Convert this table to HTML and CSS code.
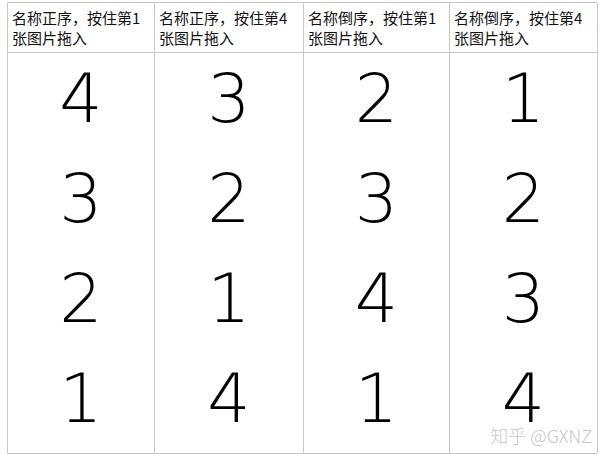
FILE: index.html
```html
<!DOCTYPE html>
<html lang="zh">
<head>
<meta charset="utf-8">
<link rel="stylesheet" href="styles.css">
</head>
<body>
<div class="sheet">
  <div class="grid">
    <div class="head">名称正序，按住第1张图片拖入</div>
    <div class="head">名称正序，按住第4张图片拖入</div>
    <div class="head">名称倒序，按住第1张图片拖入</div>
    <div class="head">名称倒序，按住第4张图片拖入</div>

    <div class="cell">4</div><div class="cell">3</div><div class="cell">2</div><div class="cell">1</div>
    <div class="cell">3</div><div class="cell">2</div><div class="cell">3</div><div class="cell">2</div>
    <div class="cell">2</div><div class="cell">1</div><div class="cell">4</div><div class="cell">3</div>
    <div class="cell">1</div><div class="cell">4</div><div class="cell">1</div><div class="cell">4</div>
  </div>
  <div class="mark">知乎 @GXNZ</div>
</div>
</body>
</html>
```
FILE: styles.css
```css
html, body {
  margin: 0;
  padding: 0;
  background: #fff;
}
.sheet {
  position: relative;
  width: 606px;
  height: 461px;
}
.grid {
  position: relative;
  top: 2px;
  left: 7px;
  width: 590px;
  display: grid;
  grid-template-columns: 147px 149px 146px 148px;
  grid-template-rows: 50px repeat(4, 100px);
  border-top: 1px solid #c6c6c6;
  border-left: 1px solid #c6c6c6;
  border-bottom: 1px solid #c6c6c6;
  box-sizing: border-box;
}
.head, .cell {
  border-right: 1px solid #c6c6c6;
}
.head {
  border-bottom: 1px solid #c6c6c6;
  font-family: "Noto Sans CJK SC", "Microsoft YaHei", sans-serif;
  font-size: 15px;
  line-height: 20px;
  color: #111;
  padding: 5px 4px 0 4px;
}
.cell {
  display: flex;
  align-items: center;
  justify-content: center;
  padding-bottom: 9px;
  font-family: "DejaVu Sans", sans-serif;
  font-weight: 200;
  font-size: 68px;
  color: #000;
}
.mark {
  position: absolute;
  right: 14px;
  bottom: 13px;
  font-family: "Noto Sans CJK SC", sans-serif;
  font-weight: 300;
  font-size: 18px;
  color: #c8c8c8;
}
```
